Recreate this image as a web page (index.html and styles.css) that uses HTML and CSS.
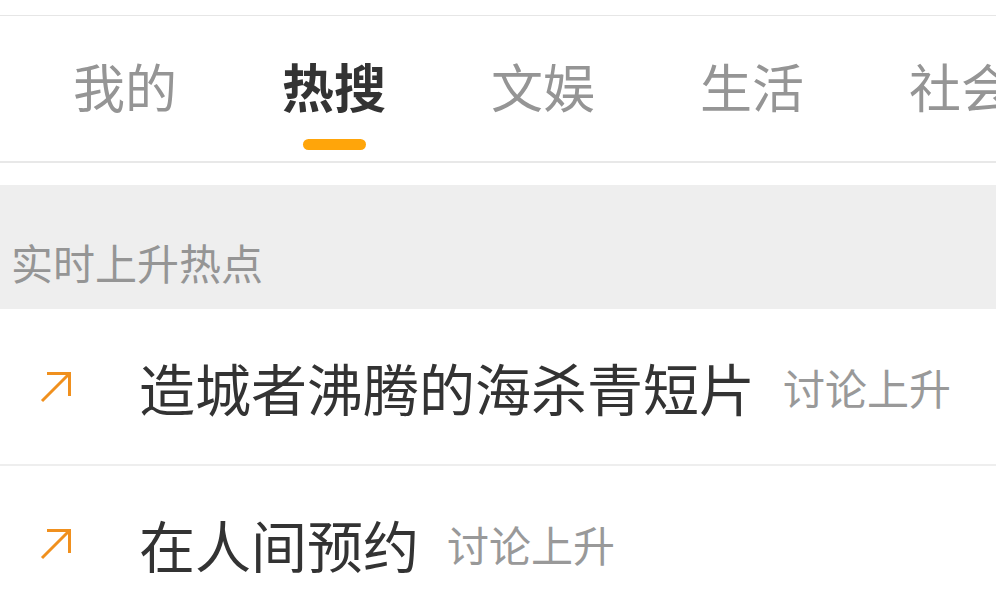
FILE: index.html
```html
<!DOCTYPE html>
<html lang="zh-CN">
<head>
    <meta charset="UTF-8">
    <meta name="viewport" content="width=device-width, initial-scale=1.0">
    <title>热搜</title>
    <link rel="stylesheet" href="styles.css">
</head>
<body>
    <div class="topbar"></div>

    <div class="tabs">
        <div class="tab">我的</div>
        <div class="tab active">热搜<span class="indicator"></span></div>
        <div class="tab">文娱</div>
        <div class="tab">生活</div>
        <div class="tab">社会</div>
    </div>

    <div class="section-title">实时上升热点</div>

    <ul class="hot-list">
        <li class="hot-item">
            <svg class="arrow" viewBox="0 0 32 32" width="32" height="32">
                <path d="M2 30 L29 3 M7 2.5 H29.5 V25" fill="none" stroke="#f0901e" stroke-width="3"/>
            </svg>
            <span class="hot-title">造城者沸腾的海杀青短片</span>
            <span class="hot-tag">讨论上升</span>
        </li>
        <li class="hot-item">
            <svg class="arrow" viewBox="0 0 32 32" width="32" height="32">
                <path d="M2 30 L29 3 M7 2.5 H29.5 V25" fill="none" stroke="#f0901e" stroke-width="3"/>
            </svg>
            <span class="hot-title">在人间预约</span>
            <span class="hot-tag">讨论上升</span>
        </li>
    </ul>
</body>
</html>
```

FILE: styles.css
```css
body {
    font-family: "Noto Sans CJK SC", "Noto Sans", sans-serif;
    background-color: #fff;
    margin: 0;
    padding: 0;
    overflow: hidden;
}

/* Top strip */
.topbar {
    height: 15px;
    border-bottom: 1px solid #e6e6e6;
}

/* Tabs */
.tabs {
    display: flex;
    gap: 105px;
    padding-left: 73px;
    height: 145px;
    border-bottom: 2px solid #e8e8e8;
    white-space: nowrap;
    overflow: hidden;
}

.tab {
    display: flex;
    flex-direction: column;
    align-items: center;
    flex-shrink: 0;
    font-size: 52px;
    line-height: 52px;
    padding-top: 44px;
    color: #959595;
}

.tab.active {
    color: #333;
    font-weight: bold;
}

.indicator {
    display: block;
    width: 63px;
    height: 11px;
    margin-top: 27px;
    border-radius: 6px;
    background-color: #ffa50a;
}

/* Section header */
.section-title {
    margin-top: 22px;
    background-color: #eeeeee;
    color: #959595;
    font-size: 42px;
    line-height: 42px;
    height: 124px;
    box-sizing: border-box;
    padding: 56px 0 0 11px;
}

/* Hot list */
.hot-list {
    list-style: none;
    margin: 0;
    padding: 0;
}

.hot-item {
    display: flex;
    align-items: center;
    height: 155px;
    border-bottom: 2px solid #eeeeee;
    white-space: nowrap;
}

.arrow {
    margin-left: 40px;
    flex-shrink: 0;
}

.hot-title {
    margin-left: 67px;
    font-size: 56px;
    line-height: 56px;
    color: #333;
}

.hot-tag {
    margin-left: 28px;
    font-size: 42px;
    line-height: 42px;
    color: #999;
}
```
